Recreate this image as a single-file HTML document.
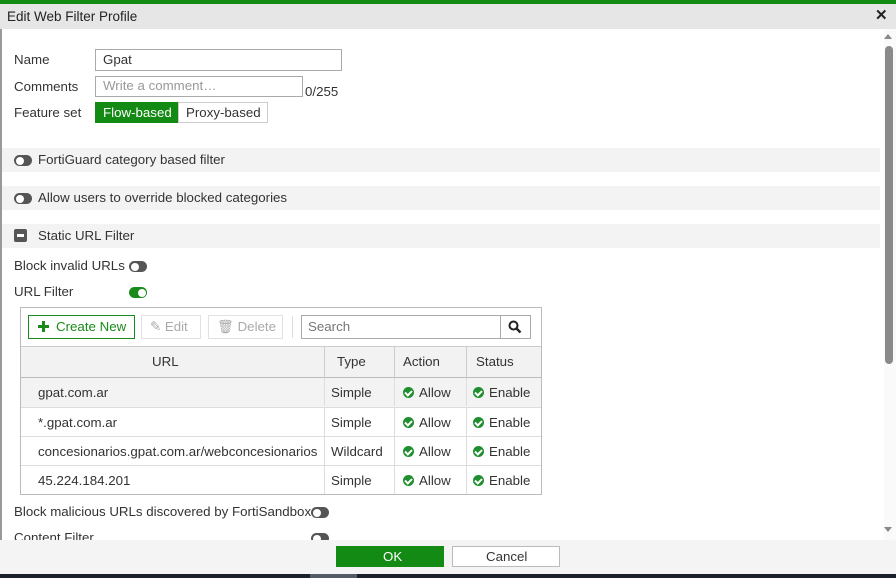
<!DOCTYPE html>
<html><head><meta charset="utf-8"><style>
*{box-sizing:border-box;margin:0;padding:0}
body{width:896px;height:578px;overflow:hidden;background:#fff;font-family:"Liberation Sans",sans-serif;font-size:13.3px;color:#333;position:relative}
.a{position:absolute}
.t{position:absolute;white-space:nowrap;line-height:16px}
.tog{position:absolute;width:18px;height:11px;border-radius:6px;background:#555}
.tog::after{content:"";position:absolute;left:1.5px;top:1.5px;width:8px;height:8px;border-radius:50%;background:#fff}
.tog.on{background:#1a8a1a}
.tog.on::after{left:8.5px}
.sec{position:absolute;left:2px;width:878px;height:24px;background:#f3f3f3}
.chk{display:inline-block;width:11px;height:11px;border-radius:50%;background:#1e8e2e;vertical-align:-1px;margin-right:5px;position:relative}
.chk::after{content:"";position:absolute;left:3px;top:2px;width:3px;height:5px;border:solid #fff;border-width:0 2px 2px 0;transform:rotate(45deg)}
.row{position:absolute;left:21px;width:520px;height:29px;border-top:1px solid #ddd}
.row div{position:absolute;top:0;height:28px;line-height:29px;padding-left:7px;border-right:1px solid #ddd;white-space:nowrap}
</style></head><body>
<div class="a" style="left:0;top:0;width:896px;height:4px;background:#138a13"></div>
<div class="a" style="left:0;top:4px;width:896px;height:25px;background:#e6e6e6"></div>
<div class="t" style="left:7px;top:9px;font-size:13.5px;color:#222">Edit Web Filter Profile</div>
<div class="t" style="left:875px;top:8px;font-size:15px;font-weight:bold;color:#222">✕</div>
<div class="a" style="left:0;top:29px;width:2px;height:511px;background:#999"></div>

<div class="t" style="left:14px;top:52px">Name</div>
<div class="a" style="left:95px;top:49px;width:247px;height:22px;border:1px solid #aaa"></div>
<div class="t" style="left:103px;top:52px">Gpat</div>
<div class="t" style="left:14px;top:79px">Comments</div>
<div class="a" style="left:95px;top:76px;width:208px;height:21px;border:1px solid #aaa"></div>
<div class="t" style="left:103px;top:78px;color:#999">Write a comment…</div>
<div class="t" style="left:305px;top:84px">0/255</div>
<div class="t" style="left:14px;top:105px">Feature set</div>
<div class="a" style="left:95px;top:102px;width:84px;height:21px;background:#138a13"></div>
<div class="t" style="left:103px;top:105px;color:#fff">Flow-based</div>
<div class="a" style="left:178px;top:102px;width:90px;height:21px;border:1px solid #ccc"></div>
<div class="t" style="left:186px;top:105px">Proxy-based</div>

<div class="sec" style="top:148px"></div>
<div class="tog" style="left:14px;top:155px"></div>
<div class="t" style="left:38px;top:152px">FortiGuard category based filter</div>
<div class="sec" style="top:186px"></div>
<div class="tog" style="left:14px;top:193px"></div>
<div class="t" style="left:38px;top:190px">Allow users to override blocked categories</div>
<div class="sec" style="top:224px"></div>
<div class="a" style="left:14px;top:229px;width:13px;height:13px;border-radius:2px;background:#555"></div>
<div class="a" style="left:17px;top:234px;width:7px;height:3px;background:#fff"></div>
<div class="t" style="left:38px;top:228px">Static URL Filter</div>

<div class="t" style="left:14px;top:258px">Block invalid URLs</div>
<div class="tog" style="left:129px;top:261px"></div>
<div class="t" style="left:14px;top:284px">URL Filter</div>
<div class="tog on" style="left:129px;top:287px"></div>

<div class="a" style="left:20px;top:307px;width:522px;height:188px;border:1px solid #bbb"></div>
<div class="a" style="left:28px;top:315px;width:107px;height:24px;border:1px solid #1a8a1a"></div>
<div class="a" style="left:38px;top:325px;width:11px;height:3px;background:#1a8a1a"></div>
<div class="a" style="left:42px;top:321px;width:3px;height:11px;background:#1a8a1a"></div>
<div class="t" style="left:56px;top:319px;color:#1a8a1a">Create New</div>
<div class="a" style="left:141px;top:315px;width:60px;height:24px;border:1px solid #e2e2e2"></div>
<div class="t" style="left:150px;top:319px;color:#aaa">✎ Edit</div>
<div class="a" style="left:208px;top:315px;width:75px;height:24px;border:1px solid #e2e2e2"></div>
<div class="t" style="left:217px;top:319px;color:#aaa">🗑 Delete</div>
<div class="a" style="left:292px;top:316px;width:1px;height:22px;background:#ddd"></div>
<div class="a" style="left:301px;top:315px;width:230px;height:24px;border:1px solid #aaa"></div>
<div class="a" style="left:500px;top:315px;width:1px;height:24px;background:#aaa"></div>
<div class="t" style="left:308px;top:319px;color:#777">Search</div>
<svg class="a" style="left:508px;top:320px" width="14" height="14" viewBox="0 0 14 14"><circle cx="5.5" cy="5.5" r="4" fill="none" stroke="#222" stroke-width="2"/><path d="M8.5 8.5L12.5 12.5" stroke="#222" stroke-width="2.4"/></svg>

<div class="a" style="left:21px;top:346px;width:520px;height:32px;background:#f2f2f2;border-top:1px solid #ccc;border-bottom:1px solid #bbb"></div>
<div class="a" style="left:324px;top:346px;width:1px;height:32px;background:#ccc"></div>
<div class="a" style="left:394px;top:346px;width:1px;height:32px;background:#ccc"></div>
<div class="a" style="left:466px;top:346px;width:1px;height:32px;background:#ccc"></div>
<div class="t" style="left:152px;top:354px">URL</div>
<div class="t" style="left:337px;top:354px">Type</div>
<div class="t" style="left:403px;top:354px">Action</div>
<div class="t" style="left:476px;top:354px">Status</div>

<div class="row" style="top:378px;background:#f3f3f3;border-top:none"><div style="left:0;width:304px;padding-left:17px">gpat.com.ar</div><div style="left:303px;width:71px">Simple</div><div style="left:373px;width:73px;padding-left:9px"><span class="chk"></span>Allow</div><div style="left:445px;width:75px;border:none"><span class="chk"></span>Enable</div></div>
<div class="row" style="top:407px"><div style="left:0;width:304px;padding-left:17px">*.gpat.com.ar</div><div style="left:303px;width:71px">Simple</div><div style="left:373px;width:73px;padding-left:9px"><span class="chk"></span>Allow</div><div style="left:445px;width:75px;border:none"><span class="chk"></span>Enable</div></div>
<div class="row" style="top:436px"><div style="left:0;width:304px;padding-left:17px">concesionarios.gpat.com.ar/webconcesionarios</div><div style="left:303px;width:71px">Wildcard</div><div style="left:373px;width:73px;padding-left:9px"><span class="chk"></span>Allow</div><div style="left:445px;width:75px;border:none"><span class="chk"></span>Enable</div></div>
<div class="row" style="top:465px"><div style="left:0;width:304px;padding-left:17px">45.224.184.201</div><div style="left:303px;width:71px">Simple</div><div style="left:373px;width:73px;padding-left:9px"><span class="chk"></span>Allow</div><div style="left:445px;width:75px;border:none"><span class="chk"></span>Enable</div></div>

<div class="t" style="left:14px;top:504px">Block malicious URLs discovered by FortiSandbox</div>
<div class="tog" style="left:311px;top:507px"></div>
<div class="t" style="left:14px;top:530px">Content Filter</div>
<div class="tog" style="left:311px;top:533px"></div>

<div class="a" style="left:884px;top:29px;width:12px;height:511px;background:#fafafa"></div>
<div class="a" style="left:884px;top:34px;width:0;height:0;border:4px solid transparent;border-bottom:5px solid #888;border-top:none"></div>
<div class="a" style="left:885px;top:46px;width:8px;height:318px;border-radius:4px;background:#8a8a8a"></div>
<div class="a" style="left:884px;top:527px;width:0;height:0;border:4px solid transparent;border-top:5px solid #888;border-bottom:none"></div>

<div class="a" style="left:0;top:540px;width:896px;height:34px;background:#f4f4f4"></div>
<div class="a" style="left:336px;top:546px;width:108px;height:21px;background:#138a13"></div>
<div class="t" style="left:383px;top:549px;color:#fff">OK</div>
<div class="a" style="left:452px;top:546px;width:108px;height:21px;background:#fff;border:1px solid #bbb"></div>
<div class="t" style="left:486px;top:549px">Cancel</div>
<div class="a" style="left:0;top:574px;width:896px;height:4px;background:#1c1f2c"></div>
<div class="a" style="left:310px;top:574px;width:47px;height:4px;background:#555a66"></div>
</body></html>
